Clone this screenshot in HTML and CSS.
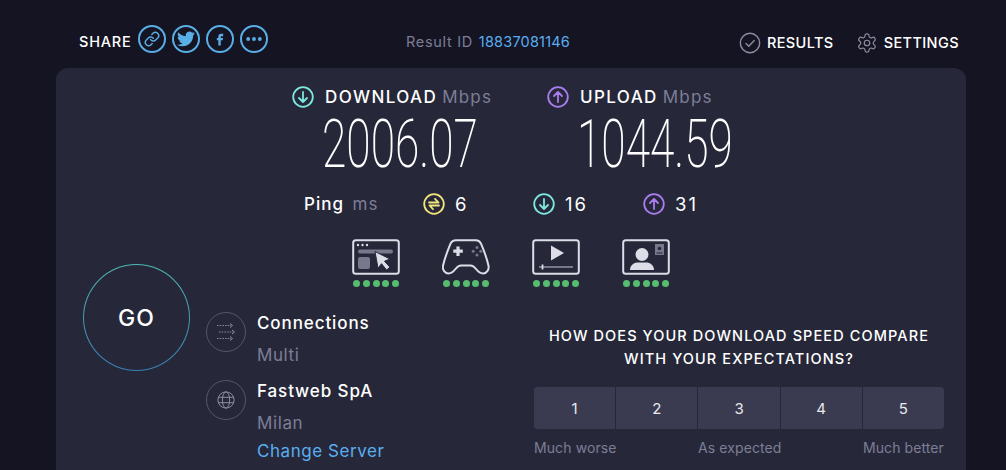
FILE: index.html
```html
<!DOCTYPE html>
<html lang="en">
<head>
  <meta charset="UTF-8">
  <meta name="viewport" content="width=device-width, initial-scale=1.0">
  <title>Speedtest Result</title>
  <link rel="stylesheet" href="styles.css">
</head>
<body>

  <div class="top-bar">
    <div class="share">
      <span class="share-label">SHARE</span>
      <a class="share-btn"><svg viewBox="0 0 24 24" width="16" height="16" fill="none" stroke="currentColor" stroke-width="2.2" stroke-linecap="round"><path d="M10 13a5 5 0 0 0 7.54.54l3-3a5 5 0 0 0-7.07-7.07l-1.72 1.71"/><path d="M14 11a5 5 0 0 0-7.54-.54l-3 3a5 5 0 0 0 7.07 7.07l1.71-1.71"/></svg></a>
      <a class="share-btn"><svg viewBox="0 0 24 24" width="18" height="18" fill="currentColor"><path d="M23.953 4.57a10 10 0 01-2.825.775 4.958 4.958 0 002.163-2.723c-.951.555-2.005.959-3.127 1.184a4.92 4.92 0 00-8.384 4.482C7.69 8.095 4.067 6.13 1.64 3.162a4.822 4.822 0 00-.666 2.475c0 1.71.87 3.213 2.188 4.096a4.904 4.904 0 01-2.228-.616v.06a4.923 4.923 0 003.946 4.827 4.996 4.996 0 01-2.212.085 4.936 4.936 0 004.604 3.417 9.867 9.867 0 01-6.102 2.105c-.39 0-.779-.023-1.17-.067a13.995 13.995 0 007.557 2.209c9.053 0 13.998-7.496 13.998-13.985 0-.21 0-.42-.015-.63A9.935 9.935 0 0024 4.59z"/></svg></a>
      <a class="share-btn"><svg viewBox="0 0 24 24" width="18" height="18" fill="currentColor"><path d="M14 8.2h2.2V5h-2.7C11 5 9.8 6.6 9.8 8.8V10.500H7.800v3h2V20.500h3.200v-7h2.600l.5-3h-3.100V9.200c0-.6.3-1 1-1z"/></svg></a>
      <a class="share-btn"><svg viewBox="0 0 24 24" width="20" height="20" fill="currentColor"><circle cx="5" cy="12" r="2.300"/><circle cx="12" cy="12" r="2.300"/><circle cx="19" cy="12" r="2.300"/></svg></a>
    </div>
    <div class="result-id">Result ID <a>18837081146</a></div>
    <div class="top-links">
      <a class="top-link">
        <svg viewBox="0 0 22 22" width="22" height="22" fill="none" stroke="#8d8ea3" stroke-width="1.4" stroke-linecap="round" stroke-linejoin="round"><circle cx="11" cy="11" r="9.700"/><path d="M7 11.500l2.800 2.700 5.400-5.600"/></svg>
        RESULTS
      </a>
      <a class="top-link">
        <svg viewBox="0 0 24 24" width="22" height="22" fill="none" stroke="#8d8ea3" stroke-width="1.3" stroke-linejoin="round"><path d="M12.220 2h-.44a2 2 0 0 0-2 2v.18a2 2 0 0 1-1 1.730l-.43.25a2 2 0 0 1-2 0l-.15-.08a2 2 0 0 0-2.730.73l-.22.38a2 2 0 0 0 .73 2.730l.15.1a2 2 0 0 1 1 1.720v.51a2 2 0 0 1-1 1.740l-.15.09a2 2 0 0 0-.73 2.730l.22.38a2 2 0 0 0 2.730.73l.15-.08a2 2 0 0 1 2 0l.43.25a2 2 0 0 1 1 1.730V20a2 2 0 0 0 2 2h.44a2 2 0 0 0 2-2v-.18a2 2 0 0 1 1-1.730l.43-.25a2 2 0 0 1 2 0l.15.08a2 2 0 0 0 2.730-.73l.22-.39a2 2 0 0 0-.73-2.730l-.15-.08a2 2 0 0 1-1-1.740v-.5a2 2 0 0 1 1-1.740l.15-.09a2 2 0 0 0 .73-2.730l-.22-.38a2 2 0 0 0-2.730-.73l-.15.08a2 2 0 0 1-2 0l-.43-.25a2 2 0 0 1-1-1.730V4a2 2 0 0 0-2-2z"/><circle cx="12" cy="12" r="3"/></svg>
        SETTINGS
      </a>
    </div>
  </div>

  <div class="panel">
    <div class="go-col">
      <button class="go-btn"><span>GO</span></button>
    </div>

    <div class="main-col">
      <div class="stats">
        <div class="metrics">
          <div class="metric">
            <div class="metric-head">
              <svg viewBox="0 0 22 22" width="22" height="22" fill="none" stroke="#7ee8e0" stroke-width="1.800" stroke-linecap="round" stroke-linejoin="round"><circle cx="11" cy="11" r="9.800"/><path d="M11 6v10M7 12l4 4 4-4"/></svg>
              <span class="metric-name">DOWNLOAD</span>
              <span class="metric-unit">Mbps</span>
            </div>
            <div class="metric-value"><span>2006.07</span></div>
          </div>
          <div class="metric">
            <div class="metric-head">
              <svg viewBox="0 0 22 22" width="22" height="22" fill="none" stroke="#a97cf0" stroke-width="1.800" stroke-linecap="round" stroke-linejoin="round"><circle cx="11" cy="11" r="9.800"/><path d="M11 16V6M7 10l4-4 4 4"/></svg>
              <span class="metric-name">UPLOAD</span>
              <span class="metric-unit">Mbps</span>
            </div>
            <div class="metric-value"><span>1044.59</span></div>
          </div>
        </div>

        <div class="ping-row">
          <div class="ping-label">Ping <span>ms</span></div>
          <div class="ping-item">
            <svg viewBox="0 0 22 22" width="22" height="22" fill="none" stroke="#f2e47c" stroke-width="1.800" stroke-linecap="round" stroke-linejoin="round"><circle cx="11" cy="11" r="9.800"/><path d="M6 9.500h9.500L12 5.800M16 12.500H6.500l3.500 3.700"/></svg>
            <span>6</span>
          </div>
          <div class="ping-item">
            <svg viewBox="0 0 22 22" width="22" height="22" fill="none" stroke="#7ee8e0" stroke-width="1.800" stroke-linecap="round" stroke-linejoin="round"><circle cx="11" cy="11" r="9.800"/><path d="M11 6v10M7 12l4 4 4-4"/></svg>
            <span>16</span>
          </div>
          <div class="ping-item">
            <svg viewBox="0 0 22 22" width="22" height="22" fill="none" stroke="#a97cf0" stroke-width="1.800" stroke-linecap="round" stroke-linejoin="round"><circle cx="11" cy="11" r="9.800"/><path d="M11 16V6M7 10l4-4 4 4"/></svg>
            <span>31</span>
          </div>
        </div>

        <div class="quality-row">
          <div class="quality">
            <svg viewBox="0 0 48 36" width="48" height="36">
              <rect x="1.200" y="1.200" width="45.600" height="33.600" rx="2.500" fill="none" stroke="#dcdde6" stroke-width="2"/>
              <circle cx="6" cy="6" r="1.200" fill="#dcdde6"/><circle cx="10.500" cy="6" r="1.200" fill="#dcdde6"/><circle cx="15" cy="6" r="1.200" fill="#dcdde6"/>
              <rect x="6" y="10.500" width="35" height="4" rx="2" fill="#77788a"/>
              <rect x="6" y="18" width="12" height="12" rx="2" fill="#77788a"/>
              <path d="M23 12.500l15 7.500-5.500 2.200 5.500 6-3.500 2.800-5-6.300-3.500 4.600z" fill="#dcdde6" stroke="#26283a" stroke-width="1"/>
            </svg>
            <div class="dots"><i></i><i></i><i></i><i></i><i></i></div>
          </div>
          <div class="quality">
            <svg viewBox="0 0 48 36" width="48" height="36" fill="none">
              <path d="M14 1.200h20c2.500 0 4 1.300 5 3.500 3 7 6 15 7.500 22 .8 4-2 7.800-5.500 7.800-3 0-5-2-7-4.500-1.700-2.200-3-3.500-5.500-3.500H19c-2.500 0-3.800 1.300-5.500 3.500-2 2.500-4 4.500-7 4.500-3.500 0-6.300-3.800-5.500-7.800C2.500 20 5.500 12 8.500 4.700c1-2.200 3-3.500 5.500-3.500z" stroke="#dcdde6" stroke-width="2"/>
              <path d="M16 7.500v9.500M11.300 12.200h9.500" stroke="#dcdde6" stroke-width="3.200"/>
              <circle cx="35" cy="8.500" r="1.500" fill="#77788a"/><circle cx="35" cy="16" r="1.500" fill="#77788a"/><circle cx="31.200" cy="12.200" r="1.500" fill="#77788a"/><circle cx="38.800" cy="12.200" r="1.500" fill="#77788a"/>
            </svg>
            <div class="dots"><i></i><i></i><i></i><i></i><i></i></div>
          </div>
          <div class="quality">
            <svg viewBox="0 0 48 36" width="48" height="36" fill="none">
              <rect x="1.200" y="1.200" width="45.600" height="33.600" rx="2.500" stroke="#dcdde6" stroke-width="2"/>
              <path d="M19 6.500l13 7.500-13 7.500z" fill="#dcdde6"/>
              <path d="M7 28h34" stroke="#77788a" stroke-width="1.800"/>
              <path d="M10.500 25.500v5" stroke="#dcdde6" stroke-width="1.800"/>
            </svg>
            <div class="dots"><i></i><i></i><i></i><i></i><i></i></div>
          </div>
          <div class="quality">
            <svg viewBox="0 0 48 36" width="48" height="36" fill="none">
              <rect x="1.200" y="1.200" width="45.600" height="33.600" rx="2.500" stroke="#dcdde6" stroke-width="2"/>
              <circle cx="20" cy="15.500" r="6.500" fill="#dcdde6"/>
              <path d="M8 31c0-5 4-7.500 8-7.500h8c4 0 8 2.500 8 7.500z" fill="#dcdde6"/>
              <rect x="33" y="5" width="9" height="11" fill="#77788a"/>
              <circle cx="37.500" cy="9.500" r="1.800" fill="#26283a"/>
              <path d="M34.500 14h6" stroke="#26283a"/>
            </svg>
            <div class="dots"><i></i><i></i><i></i><i></i><i></i></div>
          </div>
        </div>
      </div>

      <div class="bottom-row">
        <div class="server">
          <div class="server-item">
            <div class="server-icon">
              <svg viewBox="0 0 20 18" width="20" height="18" fill="none" stroke="#8d8ea3" stroke-width="1"><path d="M1 2.500h14M3 9h14M1 15.500h14" stroke-dasharray="1.500 1.200"/><path d="M14 .5l2.500 2-2.500 2M16 7l2.500 2-2.500 2M14 13.500l2.500 2-2.500 2"/></svg>
            </div>
            <div class="server-text">
              <div class="server-name">Connections</div>
              <div class="server-sub">Multi</div>
            </div>
          </div>
          <div class="server-item">
            <div class="server-icon">
              <svg viewBox="0 0 20 20" width="18" height="18" fill="none" stroke="#8d8ea3" stroke-width="1.100"><circle cx="10" cy="10" r="9"/><ellipse cx="10" cy="10" rx="4" ry="9"/><path d="M1.500 7h17M1.500 13h17"/></svg>
            </div>
            <div class="server-text">
              <div class="server-name">Fastweb SpA</div>
              <div class="server-sub">Milan</div>
              <a class="change-server">Change Server</a>
            </div>
          </div>
        </div>

        <div class="survey">
          <div class="survey-title">HOW DOES YOUR DOWNLOAD SPEED COMPARE<br>WITH YOUR EXPECTATIONS?</div>
          <div class="survey-options">
            <button>1</button><button>2</button><button>3</button><button>4</button><button>5</button>
          </div>
          <div class="survey-labels">
            <span>Much worse</span><span>As expected</span><span>Much better</span>
          </div>
        </div>
      </div>
    </div>
  </div>

</body>
</html>
```

FILE: styles.css
```css
* { margin: 0; padding: 0; box-sizing: border-box; }
body { font-family: 'Inter', 'Open Sans', sans-serif; background-color: #141423; color: #fff; height: 470px; overflow: hidden; }

/* Top bar */
.top-bar { display: flex; align-items: center; height: 68px; padding: 14px 47px 0 79px; }
.share { display: flex; align-items: center; flex-shrink: 0; }
.share-label { font-size: 14.5px; font-weight: 500; letter-spacing: 0.8px; width: 59px; }
.share-btn { width: 28px; height: 28px; margin: 0 6px 4px 0; border: 2px solid #5aaee6; border-radius: 50%; color: #5aaee6; display: flex; align-items: center; justify-content: center; flex-shrink: 0; }
.result-id { margin-left: 132px; font-size: 14.5px; letter-spacing: 0.7px; color: #7d7e96; }
.result-id a { color: #5aaef0; letter-spacing: 0.2px; margin-left: 1px; }
.top-links { margin-left: auto; display: flex; gap: 22px; padding-top: 3px; }
.top-link { display: flex; align-items: center; gap: 6px; font-size: 14.5px; font-weight: 500; letter-spacing: 0.4px; }

/* Panel */
.panel { width: 910px; height: 402px; margin-left: 56px; background: #26283a; border-radius: 12px 12px 0 0; display: flex; }
.go-col { width: 150px; padding: 196px 0 0 27px; }
.go-btn { width: 107px; height: 107px; border: 1.5px solid transparent; border-radius: 50%; background: linear-gradient(#26283a, #26283a) padding-box, linear-gradient(#4fb8b0, #3a7fb5) border-box; color: #fff; font-family: inherit; font-size: 23px; font-weight: 500; letter-spacing: 1px; }
.main-col { flex: 1; }

.stats { margin-left: 86px; padding-top: 18px; }
.metrics { display: flex; }
.metric { width: 255px; }
.metric-head { display: flex; align-items: center; height: 22px; font-size: 17px; letter-spacing: 1.4px; }
.metric-name { margin-left: 11px; font-weight: 500; }
.metric-unit { margin-left: 5px; letter-spacing: 1.2px; color: #7d7e96; }
.metric-value { margin: 4px 0 0 30px; height: 66px; font-family: 'Roboto', sans-serif; font-weight: 200; font-size: 66px; line-height: 66px; }
.metric-value span { display: inline-block; transform: scaleX(0.67); transform-origin: left center; white-space: nowrap; }

.ping-row { display: flex; align-items: center; margin-top: 15px; padding-left: 12px; font-size: 17px; letter-spacing: 1px; }
.ping-label { width: 119px; font-weight: 500; }
.ping-label span { margin-left: 3px; font-weight: 400; color: #7d7e96; }
.ping-item { width: 110px; display: flex; align-items: center; gap: 10px; }
.ping-item span { font-size: 18.5px; letter-spacing: 2px; }

.quality-row { display: flex; gap: 42px; margin-top: 24px; padding-left: 60px; }
.quality { width: 48px; }
.quality svg { display: block; }
.dots { display: flex; justify-content: space-between; margin-top: 5px; padding: 0 1px; }
.dots i { width: 7px; height: 7px; border-radius: 50%; background: #56bd6e; }

/* Server and survey */
.bottom-row { display: flex; margin-top: 3px; }
.server { width: 328px; padding-top: 22px; }
.server-item { display: flex; gap: 11px; margin-bottom: 14px; }
.server-icon { width: 40px; height: 40px; border: 1.5px solid #55566a; border-radius: 50%; display: flex; align-items: center; justify-content: center; flex-shrink: 0; }
.server-name { font-size: 17px; font-weight: 500; letter-spacing: 0.9px; line-height: 22px; }
.server-sub { font-size: 17px; letter-spacing: 0.6px; color: #7d7e96; line-height: 22px; margin-top: 10px; }
.change-server { display: block; font-size: 17px; letter-spacing: 0.55px; color: #5aaef0; line-height: 22px; margin-top: 6px; }

.survey { width: 410px; }
.survey-title { font-size: 14.5px; font-weight: 500; letter-spacing: 1.1px; line-height: 23px; text-align: center; padding-top: 34px; white-space: nowrap; }
.survey-options { display: flex; margin-top: 17px; height: 42px; border-radius: 4px; overflow: hidden; }
.survey-options button { flex: 1; border: none; border-right: 1px solid #26283a; background: #3a3b50; color: #e8e8ee; font-family: inherit; font-size: 15px; }
.survey-options button:last-child { border-right: none; }
.survey-labels { display: flex; justify-content: space-between; margin-top: 10px; font-size: 14px; letter-spacing: 0.1px; color: #7d7e96; }
```
